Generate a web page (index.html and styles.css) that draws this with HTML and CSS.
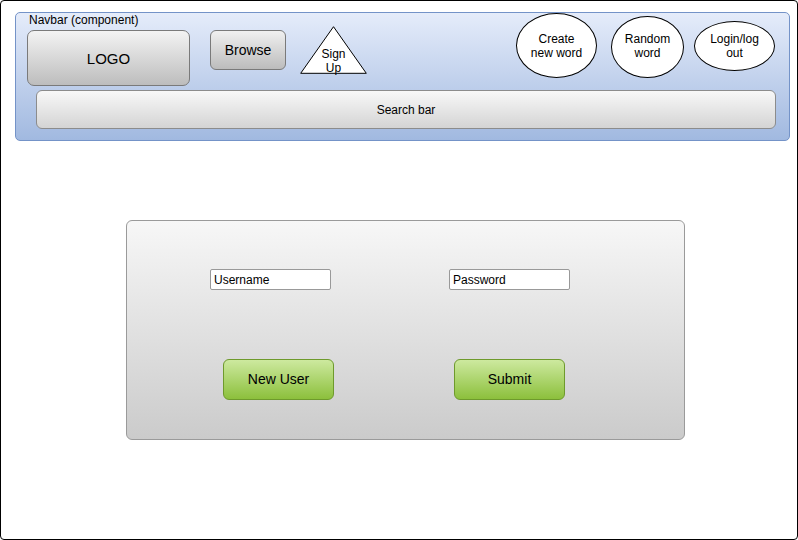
FILE: index.html
```html
<!DOCTYPE html>
<html>
<head>
<meta charset="utf-8">
<link rel="stylesheet" href="styles.css">
</head>
<body>
<div class="page">
  <div class="navbar">
    <div class="row">
      <div class="brand">
        <div class="label">Navbar (component)</div>
        <div class="logo">LOGO</div>
      </div>
      <div class="browse">Browse</div>
      <div class="signup">
        <svg class="tri" width="67" height="48" viewBox="0 0 67 48"><polygon points="33.5,0.7 66.3,47.3 0.7,47.3" fill="#fff" stroke="#000" stroke-width="1"/></svg>
        <span class="signup-text">Sign<br>Up</span>
      </div>
      <div class="ovals">
        <div class="oval create">Create<br>new word</div>
        <div class="oval random">Random<br>word</div>
        <div class="oval login">Login/log<br>out</div>
      </div>
    </div>
    <div class="search">Search bar</div>
  </div>
  <div class="panel">
    <div class="fields">
      <div class="input user">Username</div>
      <div class="input pass">Password</div>
    </div>
    <div class="actions">
      <div class="btn newuser">New User</div>
      <div class="btn submit">Submit</div>
    </div>
  </div>
</div>
</body>
</html>
```
FILE: styles.css
```css
* { box-sizing: border-box; }
html, body { margin: 0; padding: 0; background: #fff; }
body { font-family: "Liberation Sans", Arial, sans-serif; color: #000; }
.page {
  width: 798px;
  height: 540px;
  border: 1px solid #000;
  border-radius: 4px;
  padding-top: 11px;
}
.navbar {
  margin-left: 14px;
  width: 775px;
  height: 129px;
  border: 1px solid #7493c8;
  border-radius: 5px;
  background: linear-gradient(#e5ecfa, #a1b9e0);
  padding: 0 14px 0 11px;
}
.row { display: flex; align-items: flex-start; }
.brand { display: flex; flex-direction: column; }
.label { font-size: 12px; line-height: 15px; margin-left: 2px; margin-bottom: 2px; }
.logo {
  width: 163px; height: 56px;
  border: 1px solid #7a7a7a;
  border-radius: 7px;
  background: linear-gradient(#f3f3f3, #bdbdbd);
  display: flex; align-items: center; justify-content: center;
  font-size: 15px;
}
.browse {
  margin: 17px 0 0 20px;
  width: 76px; height: 40px;
  border: 1px solid #7a7a7a;
  border-radius: 6px;
  background: linear-gradient(#f0f0f0, #bcbcbc);
  display: flex; align-items: center; justify-content: center;
  font-size: 14px;
}
.signup {
  position: relative;
  margin: 13px 0 0 14px;
  width: 67px; height: 48px;
  display: flex; justify-content: center; align-items: flex-start;
}
.tri { position: absolute; left: 0; top: 0; }
.signup-text {
  position: relative;
  font-size: 12px; line-height: 14px;
  text-align: center;
  margin-top: 21px;
}
.ovals { margin-left: auto; display: flex; align-items: flex-start; }
.oval {
  background: #fff;
  border: 1px solid #000;
  border-radius: 50%;
  display: flex; align-items: center; justify-content: center;
  text-align: center;
  font-size: 12px; line-height: 14px;
}
.create { width: 81px; height: 65px; }
.random { width: 73px; height: 62px; margin: 3px 0 0 14px; padding-bottom: 3px; }
.login { width: 81px; height: 50px; margin: 8px 0 0 10px; }
.search {
  margin: 4px 0 0 9px;
  width: 740px; height: 39px;
  border: 1px solid #8c8c8c;
  border-radius: 6px;
  background: linear-gradient(#f8f8f8, #d4d4d4);
  display: flex; align-items: center; justify-content: center;
  font-size: 12px;
}
.panel {
  margin: 79px 0 0 125px;
  width: 559px; height: 220px;
  border: 1px solid #9a9a9a;
  border-radius: 6px;
  background: linear-gradient(#f7f7f7, #cbcbcb);
  padding-top: 48px;
}
.fields { display: flex; }
.input {
  width: 121px; height: 21px;
  background: #fff;
  border: 1px solid #999;
  border-radius: 2px;
  font-size: 12px; line-height: 20px;
  padding-left: 3px;
}
.user { margin-left: 83px; }
.pass { margin-left: 118px; }
.actions { display: flex; margin-top: 69px; }
.btn {
  width: 111px; height: 41px;
  border: 1px solid #6e9a2c;
  border-radius: 6px;
  background: linear-gradient(#cde99f, #8cc03c);
  display: flex; align-items: center; justify-content: center;
  font-size: 14px;
  padding-bottom: 1px;
}
.newuser { margin-left: 96px; }
.submit { margin-left: 120px; }
```
